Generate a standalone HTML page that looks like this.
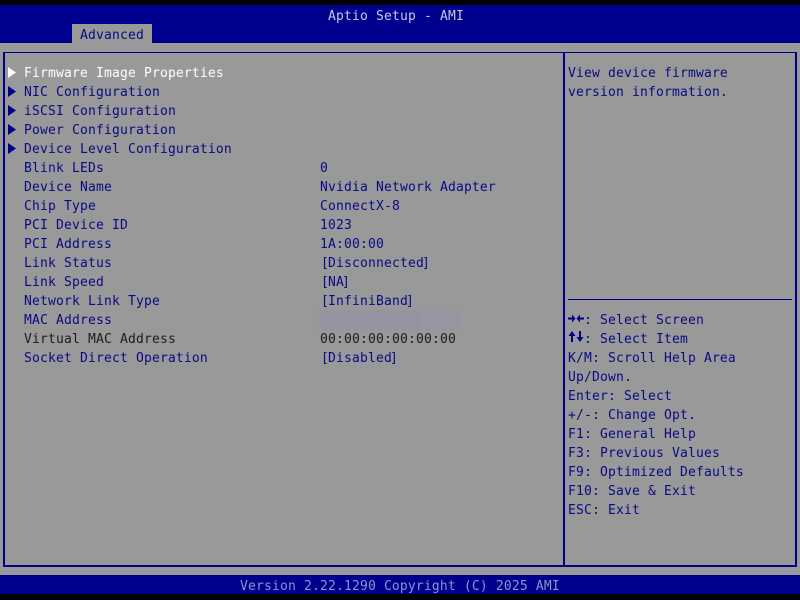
<!DOCTYPE html>
<html lang="en">
<head>
<meta charset="utf-8">
<title>Aptio Setup - AMI</title>
<style>
html,body{margin:0;padding:0;background:#000}
#s{position:relative;width:800px;height:600px;overflow:hidden;background:#000;font-family:"DejaVu Sans Mono","Liberation Mono",monospace;font-size:13px;letter-spacing:.17px;color:#00007f}
#s div{position:absolute}
.t{white-space:pre;line-height:19px;height:19px;margin-top:2px;filter:blur(.35px)}
.l{color:#0a0a84}
.k{color:#1c1c1c}
.w{color:#fff}
.a{position:relative;left:1px}
.b{position:relative;left:-2px}
</style>
</head>
<body>
<div id="s">
<div style="left:0;top:5px;width:800px;height:38px;background:#00008f"></div>
<div style="left:72px;top:24px;width:80px;height:19px;background:#999"></div>
<div style="left:0;top:43px;width:800px;height:532px;background:#999"></div>
<div style="left:0;top:575px;width:800px;height:19px;background:#00008f"></div>
<div style="left:3px;top:52px;width:794px;height:1px;background:#00008a"></div>
<div style="left:3px;top:565px;width:794px;height:2px;background:#00008a"></div>
<div style="left:3px;top:52px;width:2px;height:515px;background:#00008a"></div>
<div style="left:795px;top:52px;width:2px;height:515px;background:#00008a"></div>
<div style="left:563px;top:52px;width:2px;height:515px;background:#00008a"></div>
<div style="left:568px;top:299px;width:224px;height:1px;background:#00008a"></div>

<div class="t" style="left:328px;top:5px;color:#c8c8e4">Aptio Setup - AMI</div>
<div class="t l" style="left:80px;top:24px">Advanced</div>

<svg style="position:absolute;left:8px;top:67px" width="8" height="96" viewBox="0 0 8 96">
<path d="M0 0L8 5.500L0 11Z" fill="#fff"/>
<path d="M0 19L8 24.500L0 30Z" fill="#00008a"/>
<path d="M0 38L8 43.500L0 49Z" fill="#00008a"/>
<path d="M0 57L8 62.500L0 68Z" fill="#00008a"/>
<path d="M0 76L8 81.500L0 87Z" fill="#00008a"/>
</svg>

<div class="t w" style="left:24px;top:62px">Firmware Image Properties</div>
<div class="t l" style="left:24px;top:81px">NIC Configuration</div>
<div class="t l" style="left:24px;top:100px">iSCSI Configuration</div>
<div class="t l" style="left:24px;top:119px">Power Configuration</div>
<div class="t l" style="left:24px;top:138px">Device Level Configuration</div>
<div class="t l" style="left:24px;top:157px">Blink LEDs</div>
<div class="t l" style="left:24px;top:176px">Device Name</div>
<div class="t l" style="left:24px;top:195px">Chip Type</div>
<div class="t l" style="left:24px;top:214px">PCI Device ID</div>
<div class="t l" style="left:24px;top:233px">PCI Address</div>
<div class="t l" style="left:24px;top:252px">Link Status</div>
<div class="t l" style="left:24px;top:271px">Link Speed</div>
<div class="t l" style="left:24px;top:290px">Network Link Type</div>
<div class="t l" style="left:24px;top:309px">MAC Address</div>
<div class="t k" style="left:24px;top:328px">Virtual MAC Address</div>
<div class="t l" style="left:24px;top:347px">Socket Direct Operation</div>

<div class="t l" style="left:320px;top:157px">0</div>
<div class="t l" style="left:320px;top:176px">Nvidia Network Adapter</div>
<div class="t l" style="left:320px;top:195px">ConnectX-8</div>
<div class="t l" style="left:320px;top:214px">1023</div>
<div class="t l" style="left:320px;top:233px">1A:00:00</div>
<div class="t l" style="left:320px;top:252px"><span class="a">[</span>Disconnected<span class="b">]</span></div>
<div class="t l" style="left:320px;top:271px"><span class="a">[</span>NA<span class="b">]</span></div>
<div class="t l" style="left:320px;top:290px"><span class="a">[</span>InfiniBand<span class="b">]</span></div>
<div style="left:320px;top:311px;width:140px;height:18px;background:linear-gradient(90deg,#9393a1 0,#9393a1 70%,#9696a2 70%,#9696a2 100%);filter:blur(1px)"></div>
<div class="t k" style="left:320px;top:328px">00:00:00:00:00:00</div>
<div class="t l" style="left:320px;top:347px"><span class="a">[</span>Disabled<span class="b">]</span></div>

<div class="t l" style="left:568px;top:62px">View device firmware</div>
<div class="t l" style="left:568px;top:81px">version information.</div>

<svg style="position:absolute;left:568px;top:312px" width="16" height="33" viewBox="0 0 16 33" fill="none" stroke="#00008a" stroke-width="2">
<path d="M0 6.500H5"/><path d="M4 2.500L7.500 6.500L4 10.500Z" fill="#00008a" stroke="none"/>
<path d="M11 6.500H16"/><path d="M12 2.500L8.500 6.500L12 10.500Z" fill="#00008a" stroke="none"/>
<path d="M4 22V30"/><path d="M0.500 24L4 19L7.500 24Z" fill="#00008a" stroke="none"/>
<path d="M12 19V27"/><path d="M8.500 25L12 30L15.500 25Z" fill="#00008a" stroke="none"/>
</svg>
<div class="t l" style="left:584px;top:309px">: Select Screen</div>
<div class="t l" style="left:584px;top:328px">: Select Item</div>
<div class="t l" style="left:568px;top:347px">K/M: Scroll Help Area</div>
<div class="t l" style="left:568px;top:366px">Up/Down.</div>
<div class="t l" style="left:568px;top:385px">Enter: Select</div>
<div class="t l" style="left:568px;top:404px">+/-: Change Opt.</div>
<div class="t l" style="left:568px;top:423px">F1: General Help</div>
<div class="t l" style="left:568px;top:442px">F3: Previous Values</div>
<div class="t l" style="left:568px;top:461px">F9: Optimized Defaults</div>
<div class="t l" style="left:568px;top:480px">F10: Save &amp; Exit</div>
<div class="t l" style="left:568px;top:499px">ESC: Exit</div>

<div class="t" style="left:240px;top:575px;color:#9090cc">Version 2.22.1290 Copyright (C) 2025 AMI</div>
</div>
</body>
</html>
